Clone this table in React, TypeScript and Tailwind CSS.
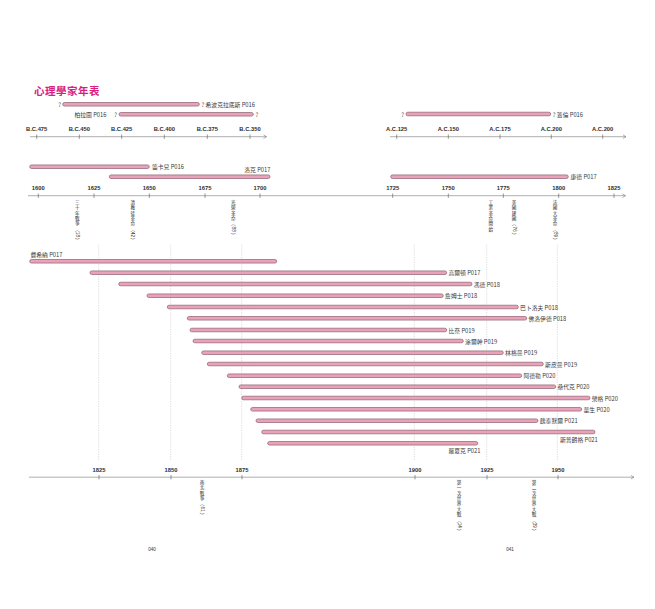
import React from "react";

const CJK = '"Noto Sans CJK TC", "Noto Sans CJK SC", sans-serif';
const LAT = '"Liberation Sans", "Noto Sans CJK TC", sans-serif';

type Bar = { x1: number; x2: number; y: number };

const PEOPLE: (Bar & { name: string; pos?: "right" | "above" | "below" })[] = [
  { name: "費希納 P017", x1: 29.7, x2: 276.7, y: 261.3, pos: "above" },
  { name: "高爾頓 P017", x1: 90, x2: 446.7, y: 272.7 },
  { name: "馮德 P018", x1: 118.7, x2: 472, y: 284 },
  { name: "詹姆士 P018", x1: 147, x2: 443.3, y: 295.7 },
  { name: "巴卜洛夫 P018", x1: 167.3, x2: 518.3, y: 307 },
  { name: "佛洛伊德 P018", x1: 187.3, x2: 526.7, y: 318.3 },
  { name: "比奈 P019", x1: 190, x2: 446.7, y: 330 },
  { name: "涂爾幹 P019", x1: 193, x2: 463.3, y: 341 },
  { name: "林格曼 P019", x1: 201.7, x2: 503.3, y: 352.7 },
  { name: "斯皮曼 P019", x1: 207.3, x2: 543.3, y: 364 },
  { name: "阿德勒 P020", x1: 227.3, x2: 521.7, y: 375.7 },
  { name: "桑代克 P020", x1: 239, x2: 555.7, y: 386.7 },
  { name: "榮格 P020", x1: 241.7, x2: 590, y: 398 },
  { name: "華生 P020", x1: 250.7, x2: 581.7, y: 409.3 },
  { name: "魏泰默爾 P021", x1: 256, x2: 538, y: 420.7 },
  { name: "斯普朗格 P021", x1: 261.7, x2: 595, y: 432, pos: "below" },
  { name: "羅夏克 P021", x1: 267.7, x2: 477.7, y: 443.3, pos: "below" },
];

const EVENTS: { x: number; y: number; text: string }[] = [
  { x: 77.3, y: 199, text: "三十年戰爭（18）" },
  { x: 132.7, y: 199, text: "清教徒革命（42）" },
  { x: 233.3, y: 199, text: "光榮革命（88）" },
  { x: 490.7, y: 199, text: "工業革命開始" },
  { x: 514, y: 199, text: "美國建國（76）" },
  { x: 555, y: 199, text: "法國大革命（89）" },
  { x: 202, y: 479, text: "南北戰爭（61）" },
  { x: 459, y: 479, text: "第一次世界大戰（14）" },
  { x: 534, y: 479, text: "第二次世界大戰（39）" },
];

function Pill({ x1, x2, y }: Bar) {
  return (
    <rect x={x1} y={y - 1.8} width={x2 - x1} height={3.6} rx={1.8}
      fill="#e8a3b9" stroke="#7e4c5e" strokeWidth={0.6} />
  );
}

function Label({ x, y, children, anchor = "start" }: { x: number; y: number; children: React.ReactNode; anchor?: "start" | "end" | "middle" }) {
  return (
    <text x={x} y={y} fontSize={5.8} fill="#3a3a3a" fontFamily={CJK}
      textAnchor={anchor} dominantBaseline="central">{children}</text>
  );
}

// stacks CJK upright, turns digit runs sideways like vertical typesetting
function VText({ x, y, text, size = 4.6, step = 5.4 }: { x: number; y: number; text: string; size?: number; step?: number }) {
  const parts = text.match(/\d+|./g) ?? [];
  let cy = y;
  const out: React.ReactNode[] = [];
  parts.forEach((p, i) => {
    if (/\d/.test(p)) {
      const w = p.length * size * 0.56;
      out.push(
        <text key={i} transform={`translate(${x},${cy + 0.6}) rotate(90)`} fontSize={size} fill="#2a2a2a"
          fontFamily={LAT} dominantBaseline="central">{p}</text>
      );
      cy += w + 1.2;
    } else {
      const g = p === "（" ? "︵" : p === "）" ? "︶" : p;
      out.push(
        <text key={i} x={x} y={cy + step * 0.5} fontSize={size} fill="#2a2a2a" fontFamily={CJK}
          textAnchor="middle" dominantBaseline="central">{g}</text>
      );
      cy += step;
    }
  });
  return <g>{out}</g>;
}

function Axis({ x1, x2, y, ticks }: { x1: number; x2: number; y: number; ticks: [number, string][] }) {
  return (
    <g>
      <line x1={x1} y1={y} x2={x2} y2={y} stroke="#7a7a7a" strokeWidth={0.6} />
      <polyline points={`${x2 - 3},${y - 1.8} ${x2},${y} ${x2 - 3},${y + 1.8}`}
        fill="none" stroke="#7a7a7a" strokeWidth={0.6} />
      {ticks.map(([x, t]) => (
        <g key={t + x}>
          <line x1={x} y1={y - 2.2} x2={x} y2={y + 2.2} stroke="#555" strokeWidth={0.6} />
          <text x={x} y={y - 7.5} fontSize={5.8} fontWeight={700} fill="#2e2e2e"
            fontFamily={LAT} textAnchor="middle" dominantBaseline="central">{t}</text>
        </g>
      ))}
    </g>
  );
}

export default function App() {
  return (
    <div className="w-[655px] h-[609px] bg-white overflow-hidden">
      <h1 className="pt-[84px] pl-[34px] h-[98px] text-[10.5px] leading-[14px] font-bold text-[#d8207f] tracking-[0.5px] font-['Noto_Sans_CJK_TC',sans-serif]">
        心理學家年表
      </h1>
      <svg width={655} height={511} viewBox="0 98 655 511" className="block">
        {/* B.C. */}
        <Pill x1={62.7} x2={199.3} y={104.3} />
        <Label x={61} y={104} anchor="end">?</Label>
        <Label x={201.5} y={104}>? 希波克拉底斯 P016</Label>
        <Pill x1={119} x2={253.3} y={114.3} />
        <Label x={106.5} y={114} anchor="end">柏拉圖 P016</Label>
        <Label x={117} y={114} anchor="end">?</Label>
        <Label x={255.5} y={114}>?</Label>
        <Axis x1={30} x2={266.5} y={136.7} ticks={[[36.7, "B.C.475"], [79.3, "B.C.450"], [121.7, "B.C.425"], [164.3, "B.C.400"], [207.3, "B.C.375"], [250, "B.C.350"]]} />

        {/* A.C. */}
        <Pill x1={406} x2={550.7} y={114} />
        <Label x={404} y={114} anchor="end">?</Label>
        <Label x={552.8} y={114}>? 蓋倫 P016</Label>
        <Axis x1={390} x2={626} y={136.7} ticks={[[396.7, "A.C.125"], [448.3, "A.C.150"], [500, "A.C.175"], [551.3, "A.C.200"], [602.7, "A.C.200"]]} />

        {/* 1600 - 1825 */}
        <Pill x1={29.7} x2={149.3} y={166.7} />
        <Label x={152} y={166.5}>笛卡兒 P016</Label>
        <Pill x1={109.3} x2={270} y={176.7} />
        <Label x={270.5} y={169.6} anchor="end">洛克 P017</Label>
        <Pill x1={390.7} x2={568.3} y={176.7} />
        <Label x={570.5} y={176.5}>康德 P017</Label>
        <Axis x1={28} x2={625.5} y={195.7} ticks={[[38.3, "1600"], [94, "1625"], [149.3, "1650"], [205, "1675"], [260, "1700"], [392.7, "1725"], [448.3, "1750"], [503.3, "1775"], [558.7, "1800"], [614, "1825"]]} />

        {/* dashed guides */}
        {[98.7, 170.7, 241.7, 414.3, 486.7, 557.3].map((x) => (
          <line key={x} x1={x} y1={245} x2={x} y2={461} stroke="#b8b8b8" strokeWidth={0.5} strokeDasharray="1.2 1.2" />
        ))}

        {/* 1825 - 1950 */}
        {PEOPLE.map((p) => (
          <g key={p.name}>
            <Pill x1={p.x1} x2={p.x2} y={p.y} />
            {p.pos === "above" ? (
              <Label x={30.5} y={p.y - 7.3}>{p.name}</Label>
            ) : p.pos === "below" ? (
              <Label x={p.x2 + 2.8} y={p.y + 7.6} anchor="end">{p.name}</Label>
            ) : (
              <Label x={p.x2 + 1.8} y={p.y}>{p.name}</Label>
            )}
          </g>
        ))}
        <Axis x1={29} x2={634} y={477.2} ticks={[[99, "1825"], [171, "1850"], [242, "1875"], [415, "1900"], [487, "1925"], [558, "1950"]]} />

        {/* events */}
        {EVENTS.map((e) => (
          <VText key={e.text} x={e.x} y={e.y} text={e.text} />
        ))}

        {/* page numbers */}
        <text x={152} y={549} fontSize={4.6} fill="#333" fontFamily={LAT} textAnchor="middle" dominantBaseline="central">040</text>
        <text x={510} y={549} fontSize={4.6} fill="#333" fontFamily={LAT} textAnchor="middle" dominantBaseline="central">041</text>
      </svg>
    </div>
  );
}
